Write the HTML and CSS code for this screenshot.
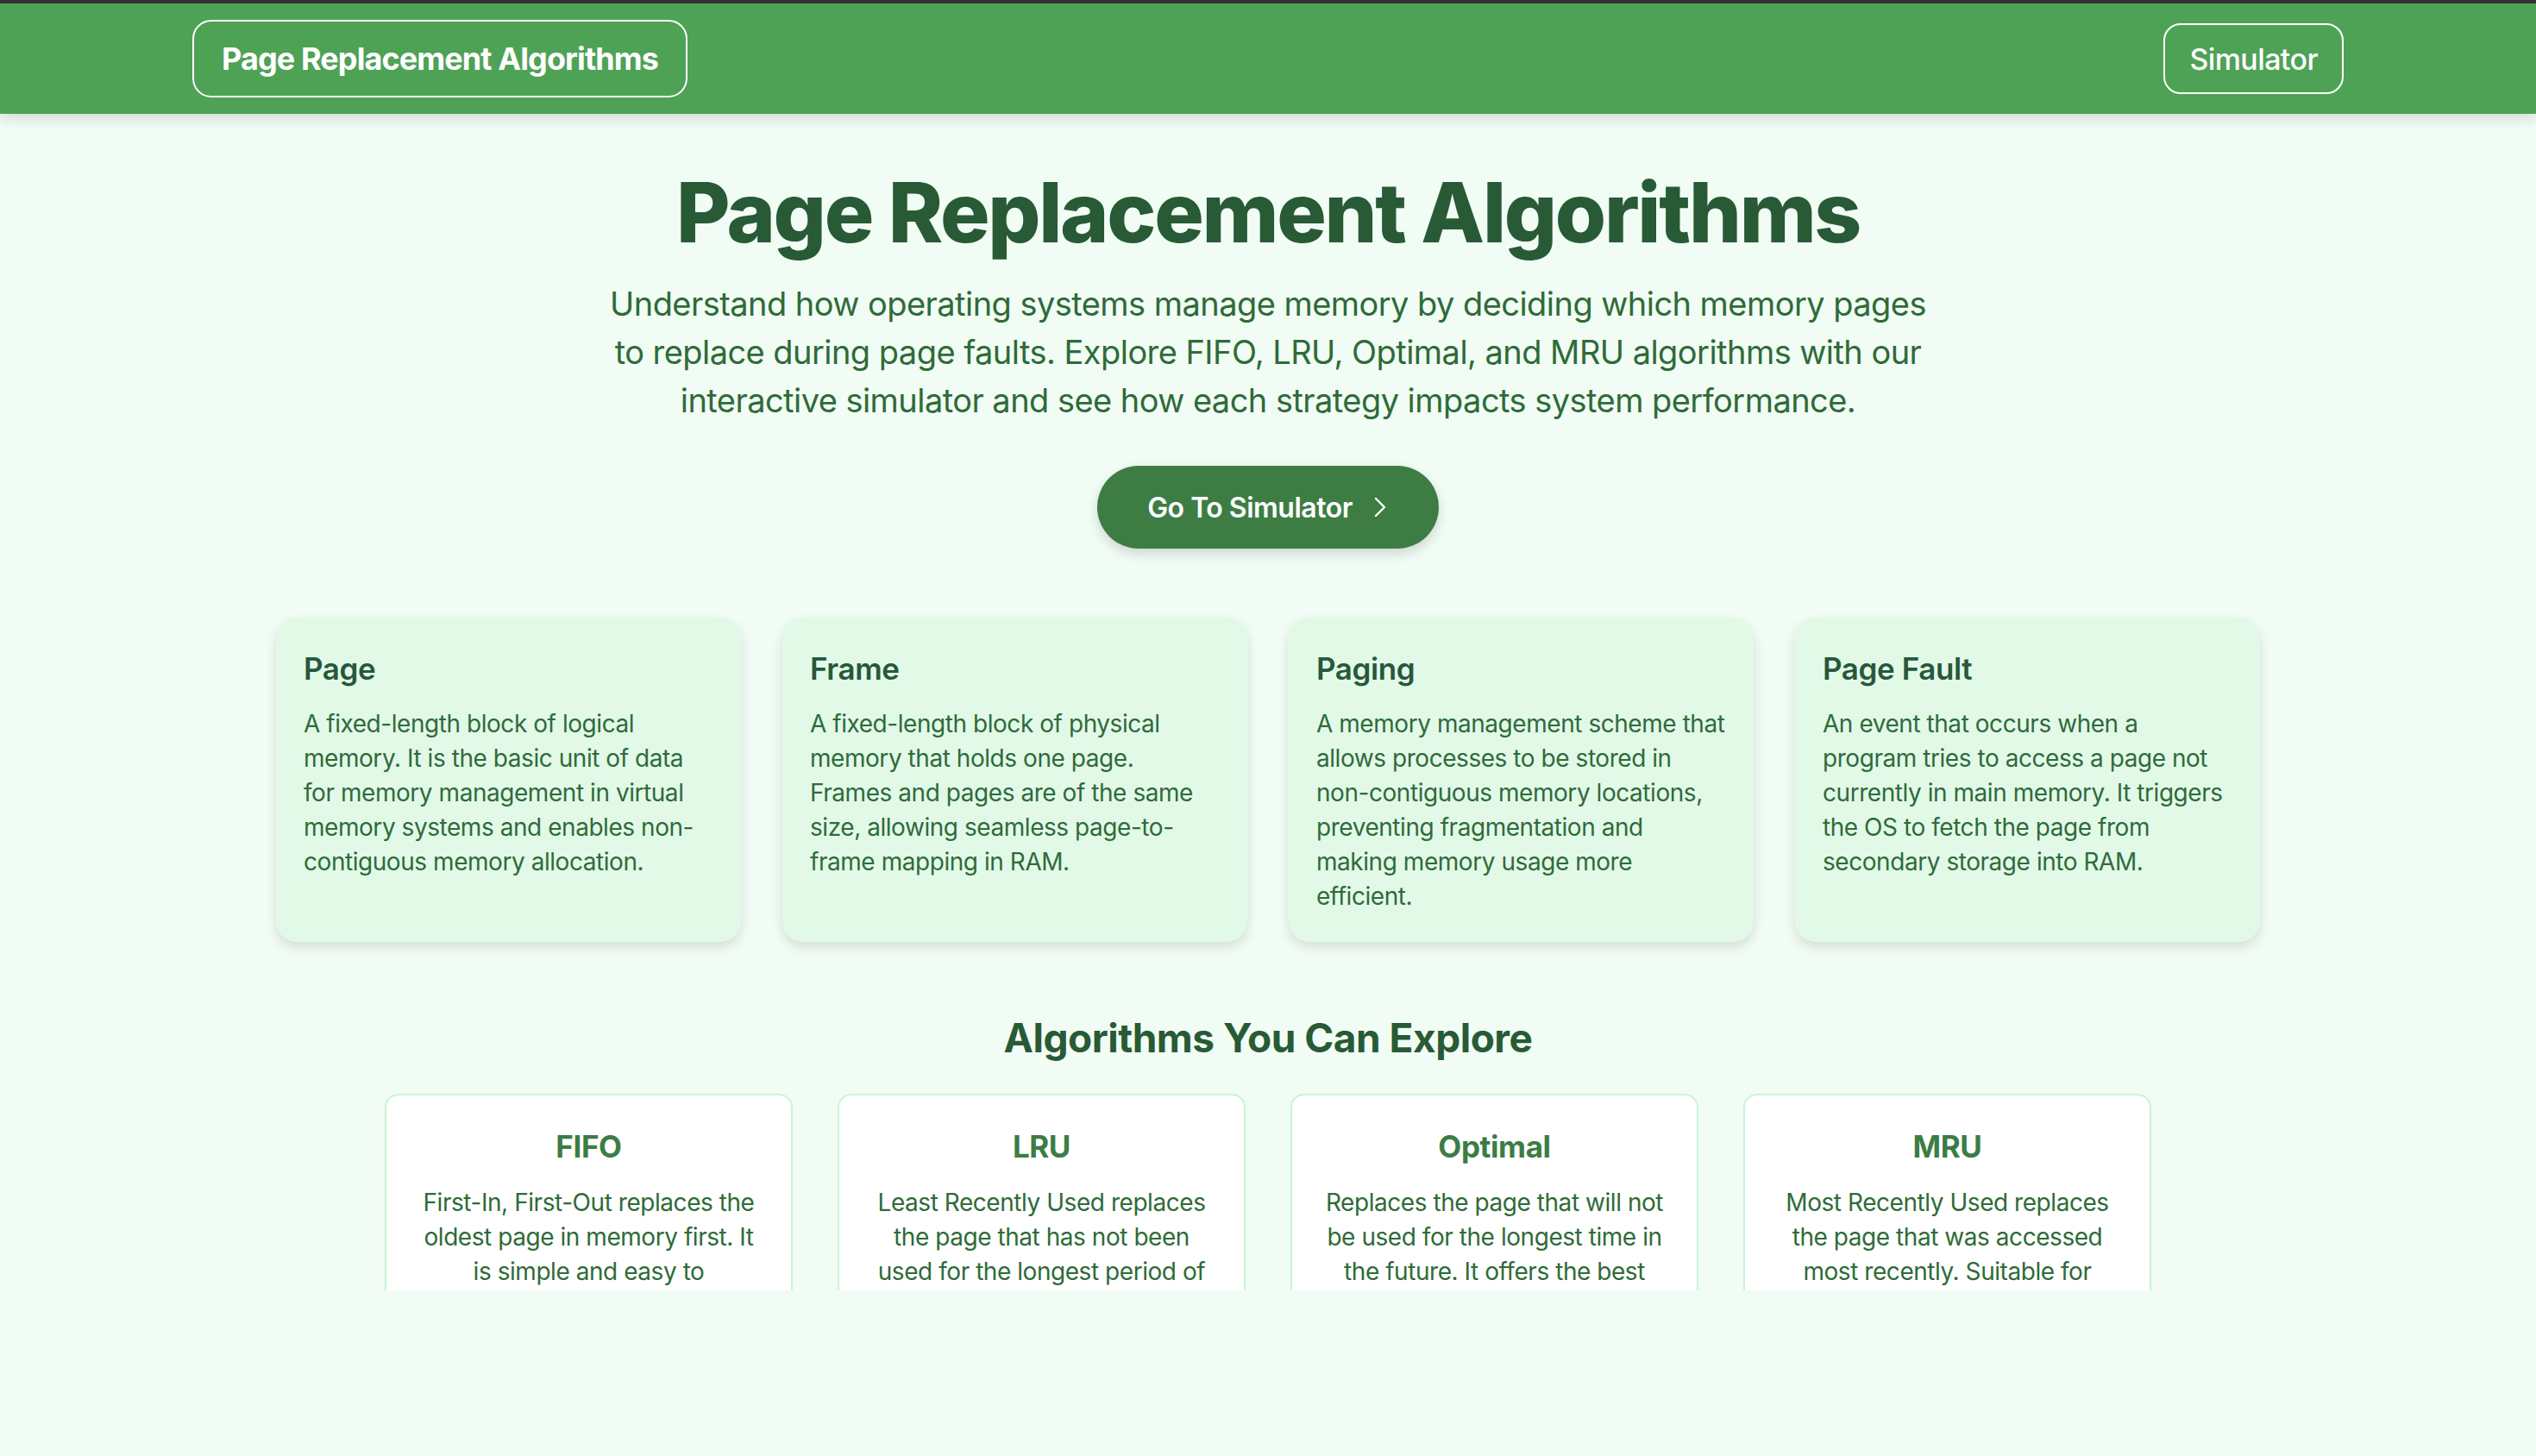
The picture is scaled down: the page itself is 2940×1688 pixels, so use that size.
FILE: index.html
```html
<!DOCTYPE html>
<html lang="en">
<head>
<meta charset="utf-8">
<title>Page Replacement Algorithms</title>
<link rel="stylesheet" href="styles.css">
</head>
<body>
<div class="topline"></div>
<nav class="navbar">
  <a class="brand" href="#">Page Replacement Algorithms</a>
  <a class="nav-btn" href="#">Simulator</a>
</nav>
<main class="main">
  <section class="hero">
    <h1 class="hero-title">Page Replacement Algorithms</h1>
    <p class="hero-text">Understand how operating systems manage memory by deciding which memory pages to replace during page faults. Explore FIFO, LRU, Optimal, and MRU algorithms with our interactive simulator and see how each strategy impacts system performance.</p>
    <a class="cta" href="#">Go To Simulator
      <svg class="cta-icon" viewBox="0 0 16 26" width="16" height="26" fill="none" stroke="#fff" stroke-width="2.4" stroke-linecap="round" stroke-linejoin="round"><path d="M3 3 L13 13 L3 23"/></svg>
    </a>
  </section>

  <section class="concepts">
    <div class="concept">
      <h3 class="concept-title">Page</h3>
      <p class="concept-text">A fixed-length block of logical memory. It is the basic unit of data for memory management in virtual memory systems and enables non-contiguous memory allocation.</p>
    </div>
    <div class="concept">
      <h3 class="concept-title">Frame</h3>
      <p class="concept-text">A fixed-length block of physical memory that holds one page. Frames and pages are of the same size, allowing seamless page-to-frame mapping in RAM.</p>
    </div>
    <div class="concept">
      <h3 class="concept-title">Paging</h3>
      <p class="concept-text">A memory management scheme that allows processes to be stored in non-contiguous memory locations, preventing fragmentation and making memory usage more efficient.</p>
    </div>
    <div class="concept">
      <h3 class="concept-title">Page Fault</h3>
      <p class="concept-text">An event that occurs when a program tries to access a page not currently in main memory. It triggers the OS to fetch the page from secondary storage into RAM.</p>
    </div>
  </section>

  <section class="algos">
    <h2 class="algos-title">Algorithms You Can Explore</h2>
    <div class="algo-clip">
      <div class="algo-grid">
        <div class="algo">
          <h3 class="algo-title">FIFO</h3>
          <p class="algo-text">First-In, First-Out replaces the oldest page in memory first. It is simple and easy to implement but may suffer from Belady's anomaly.</p>
        </div>
        <div class="algo">
          <h3 class="algo-title">LRU</h3>
          <p class="algo-text">Least Recently Used replaces the page that has not been used for the longest period of time, approximating optimal behaviour.</p>
        </div>
        <div class="algo">
          <h3 class="algo-title">Optimal</h3>
          <p class="algo-text">Replaces the page that will not be used for the longest time in the future. It offers the best possible performance as a benchmark.</p>
        </div>
        <div class="algo">
          <h3 class="algo-title">MRU</h3>
          <p class="algo-text">Most Recently Used replaces the page that was accessed most recently. Suitable for specific cyclic access patterns.</p>
        </div>
      </div>
    </div>
  </section>
</main>
</body>
</html>
```

FILE: styles.css
```css
* { box-sizing: border-box; }

html, body {
  margin: 0;
  padding: 0;
}

body {
  background: #f1fcf4;
  font-family: Inter, "Noto Sans", "Liberation Sans", sans-serif;
  color: #2f6b3a;
  height: 1688px;
  overflow: hidden;
}

.topline {
  height: 4px;
  background: #333335;
}

.navbar {
  height: 128px;
  background: #4ea256;
  display: flex;
  align-items: center;
  justify-content: space-between;
  padding: 0 223px;
  box-shadow: 0 6px 14px rgba(0, 0, 0, 0.12);
  position: relative;
  z-index: 2;
}

.brand {
  display: flex;
  align-items: center;
  height: 90px;
  padding: 0 32px;
  border: 2px solid #ffffff;
  border-radius: 22px;
  color: #ffffff;
  text-decoration: none;
  font-size: 36px;
  font-weight: 700;
  letter-spacing: -0.9px;
}

.nav-btn {
  display: flex;
  align-items: center;
  height: 82px;
  padding: 0 28px;
  border: 2px solid #ffffff;
  border-radius: 20px;
  color: #ffffff;
  text-decoration: none;
  font-size: 34px;
  font-weight: 500;
  letter-spacing: -0.6px;
}

.main {
  display: flex;
  flex-direction: column;
  align-items: center;
}

.hero {
  display: flex;
  flex-direction: column;
  align-items: center;
  padding-top: 56px;
}

.hero-title {
  margin: 0;
  font-size: 96px;
  line-height: 116px;
  font-weight: 800;
  color: #285a35;
  letter-spacing: -2.3px;
}

.hero-text {
  margin: 20px 0 0;
  max-width: 1560px;
  text-align: center;
  font-size: 38px;
  line-height: 56px;
  color: #2e6b38;
  letter-spacing: -0.55px;
}

.cta {
  margin-top: 48px;
  display: flex;
  align-items: center;
  gap: 24px;
  height: 96px;
  padding: 0 60px 0 58px;
  background: #3d7d44;
  border-radius: 48px;
  color: #ffffff;
  text-decoration: none;
  font-size: 32px;
  font-weight: 600;
  letter-spacing: -0.5px;
  box-shadow: 0 6px 14px rgba(0, 0, 0, 0.15);
}

.cta-icon { display: block; }

.concepts {
  margin-top: 80px;
  display: grid;
  grid-template-columns: repeat(4, 539px);
  gap: 48px;
}

.concept {
  height: 376px;
  background: #e2f9e8;
  border-radius: 24px;
  padding: 38px 32px 0;
  box-shadow: 0 6px 14px rgba(0, 0, 0, 0.12);
}

.concept-title {
  margin: 0;
  font-size: 35px;
  line-height: 42px;
  font-weight: 600;
  color: #27583a;
  letter-spacing: -0.4px;
}

.concept-text {
  margin: 23px 0 0;
  font-size: 28px;
  line-height: 40px;
  color: #2f6b3a;
  letter-spacing: -0.45px;
}

.algos {
  display: flex;
  flex-direction: column;
  align-items: center;
}

.algos-title {
  margin: 83px 0 0;
  font-size: 46px;
  line-height: 56px;
  font-weight: 700;
  color: #285a35;
  letter-spacing: -0.5px;
}

.algo-clip {
  margin-top: 37px;
  height: 228px;
  overflow: hidden;
}

.algo-grid {
  display: grid;
  grid-template-columns: repeat(4, 473px);
  gap: 52px;
}

.algo {
  background: #ffffff;
  border: 2px solid #c9f4d4;
  border-radius: 16px;
  padding: 38px 38px;
  text-align: center;
  height: 420px;
}

.algo-title {
  margin: 0;
  font-size: 35px;
  line-height: 42px;
  font-weight: 700;
  color: #3b7d45;
  letter-spacing: -0.4px;
}

.algo-text {
  margin: 24px 0 0;
  font-size: 28px;
  line-height: 40px;
  color: #2e6b38;
  letter-spacing: -0.45px;
}
```
